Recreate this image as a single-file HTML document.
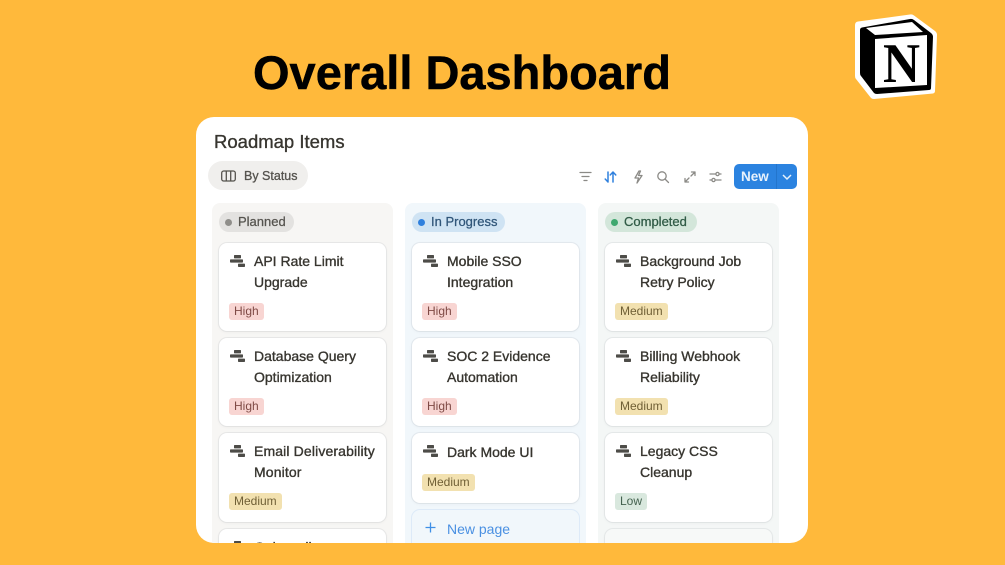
<!DOCTYPE html>
<html><head><meta charset="utf-8">
<style>
*{box-sizing:border-box;margin:0;padding:0}
html,body{width:1005px;height:565px;overflow:hidden;background:#ffb93b;font-family:"Liberation Sans",sans-serif;color:#37352f}
.a{position:absolute}
h1{position:absolute;left:253px;top:45px;font-size:47px;line-height:56px;font-weight:700;color:#000;white-space:nowrap;-webkit-text-stroke:.5px #000}
#panel{position:absolute;left:196px;top:117px;width:612px;height:426px;background:#fff;border-radius:18px;overflow:hidden}
.col{position:absolute;top:86px;width:181px;height:340px;border-radius:8px 8px 0 0;overflow:hidden}
.card{position:absolute;left:7px;width:167px;background:#fff;border-radius:8px;box-shadow:0 0 0 1px rgba(60,70,80,.07),0 1px 3px rgba(60,70,80,.06)}
.card.cut{border-radius:8px 8px 0 0;overflow:hidden}
.t{position:absolute;left:35px;top:7.5px;font-size:14px;line-height:21px;font-weight:400;color:#37352f;white-space:nowrap;-webkit-text-stroke:.35px #37352f}
.i{position:absolute;left:11px;top:11px;width:16px;height:14px}
.tag{position:absolute;left:10px;height:17px;line-height:17px;font-size:12px;padding:0 5px;border-radius:3px;white-space:nowrap}
.h{background:#f8d5d2;color:#7f4a45}.m{background:#f2e1b0;color:#6f5f35}.l{background:#d9e8de;color:#44624f}
.pill{position:absolute;left:7px;top:9px;height:20px;border-radius:10px;font-size:13px;line-height:20px;padding-left:19px;white-space:nowrap}
.dot{position:absolute;left:6px;top:6.5px;width:7px;height:7px;border-radius:50%}
</style></head><body>
<h1>Overall Dashboard</h1>

<svg class="a" style="left:854px;top:13px" width="84" height="87" viewBox="0 0 84 87">
<path d="M1 12 Q1 9 4 8.5 L56 1.5 Q58 1 60 2.5 L81 18 Q83 19.5 83 22 L81 78 Q81 80 79 80.5 L20 86 Q18 86 17 85 L2 66 Q1 65 1 63Z" fill="#fff"/>
<path d="M6 17 Q6 15 8 14.5 L56 6 Q58 5.5 60 7 L77 20 Q79 21.5 79 24 L77 75 Q77 77 75 77 L23 81 Q21 81 20 80 L7 63 Q6 62 6 60Z" fill="#000"/>
<path d="M12 15 L58 9 L69 19 L21 22Z" fill="#fff"/>
<path d="M21 26 L73 22 L73 72 L21 75Z" fill="#fff"/>
<text x="29" y="69" font-family="Liberation Serif,serif" font-weight="700" font-size="56" textLength="37" lengthAdjust="spacingAndGlyphs" fill="#000">N</text>
</svg>

<div id="panel">
 <div class="a" style="left:18px;top:13px;font-size:18.5px;line-height:24px;color:#37352f;white-space:nowrap;-webkit-text-stroke:.35px #37352f">Roadmap Items</div>
 <div class="a" style="left:12px;top:44px;width:100px;height:29px;background:#f0efed;border-radius:15px"></div>
 <svg class="a" style="left:25px;top:53px" width="15" height="12" viewBox="0 0 15 12" fill="none" stroke="#55534e" stroke-width="1.3"><rect x=".7" y="1" width="13.6" height="10" rx="2"/><path d="M5.3 1v10M9.7 1v10"/></svg>
 <div class="a" style="left:48px;top:51px;font-size:12.5px;line-height:16px;color:#55534e;white-space:nowrap;-webkit-text-stroke:.3px #55534e">By Status</div>

 <svg class="a" style="left:382px;top:52px" width="145" height="16" viewBox="0 0 145 16" fill="none" stroke-width="1.3" stroke-linecap="round" stroke-linejoin="round">
  <path d="M2 3.5h11M4 7.5h7M6 11.5h3" stroke="#8b8a86"/>
  <path d="M30 3v10M27.2 10l2.8 3 M35 13V3M32.2 6L35 3l2.8 3" stroke="#2f80dd" stroke-width="1.5"/>
  <path d="M61 2l-4 7h3.5l-1.5 5 5-7.5h-3.5L62.5 2z" stroke="#8b8a86"/>
  <circle cx="84" cy="7" r="4.2" stroke="#8b8a86"/><path d="M87 10l3.5 3.5" stroke="#8b8a86"/>
  <path d="M107 13l4-4M107 9.5V13h3.5M117 3l-4 4M113.5 3H117v3.5" stroke="#8b8a86"/>
  <path d="M132 5h5M142 5h1M132 11h1M138 11h5" stroke="#8b8a86"/><circle cx="139.5" cy="5" r="1.6" stroke="#8b8a86"/><circle cx="135.5" cy="11" r="1.6" stroke="#8b8a86"/>
 </svg>
 <div class="a" style="left:538px;top:47px;width:63px;height:25px;background:#2b83e0;border-radius:5px"></div>
 <div class="a" style="left:580px;top:47px;width:1px;height:25px;background:#2375cc"></div>
 <div class="a" style="left:545px;top:52px;font-size:13.5px;line-height:16px;font-weight:700;color:#e8f2fc;white-space:nowrap">New</div>
 <svg class="a" style="left:585px;top:56px" width="12" height="8" viewBox="0 0 12 8" fill="none" stroke="#e8f2fc" stroke-width="1.5"><path d="M2 2l4 4 4-4"/></svg>

 <div class="col" style="left:16px;background:#f7f6f4">
  <div class="pill" style="width:75px;background:#e3e2e0;color:#55534e;-webkit-text-stroke:.25px #55534e"><span class="dot" style="background:#8f8e8a"></span>Planned</div>
  <div class="card" style="top:40px;height:88px"><svg class="i" viewBox="0 0 16 14" fill="#4d4c48"><rect x="4" y="1" width="7" height="3.4" rx=".7"/><rect y="5.4" width="13" height="3.2" rx=".7"/><rect x="8" y="9.6" width="7" height="3.4" rx=".7"/></svg><div class="t">API Rate Limit<br>Upgrade</div><div class="tag h" style="top:60px">High</div></div>
  <div class="card" style="top:135px;height:88px"><svg class="i" viewBox="0 0 16 14" fill="#4d4c48"><rect x="4" y="1" width="7" height="3.4" rx=".7"/><rect y="5.4" width="13" height="3.2" rx=".7"/><rect x="8" y="9.6" width="7" height="3.4" rx=".7"/></svg><div class="t">Database Query<br>Optimization</div><div class="tag h" style="top:60px">High</div></div>
  <div class="card" style="top:230px;height:89px"><svg class="i" viewBox="0 0 16 14" fill="#4d4c48"><rect x="4" y="1" width="7" height="3.4" rx=".7"/><rect y="5.4" width="13" height="3.2" rx=".7"/><rect x="8" y="9.6" width="7" height="3.4" rx=".7"/></svg><div class="t" style="top:8px;letter-spacing:.13px">Email Deliverability<br>Monitor</div><div class="tag m" style="top:60px">Medium</div></div>
  <div class="card cut" style="top:326px;height:14px"><svg class="i" viewBox="0 0 16 14" fill="#4d4c48"><rect x="4" y="1" width="7" height="3.4" rx=".7"/><rect y="5.4" width="13" height="3.2" rx=".7"/><rect x="8" y="9.6" width="7" height="3.4" rx=".7"/></svg><div class="t">Onboarding</div></div>
 </div>

 <div class="col" style="left:209px;background:#f1f7fb">
  <div class="pill" style="width:93px;background:#cfe3f3;color:#2f5578;-webkit-text-stroke:.25px #2f5578"><span class="dot" style="background:#2f80dd"></span>In Progress</div>
  <div class="card" style="top:40px;height:88px"><svg class="i" viewBox="0 0 16 14" fill="#4d4c48"><rect x="4" y="1" width="7" height="3.4" rx=".7"/><rect y="5.4" width="13" height="3.2" rx=".7"/><rect x="8" y="9.6" width="7" height="3.4" rx=".7"/></svg><div class="t">Mobile SSO<br>Integration</div><div class="tag h" style="top:60px">High</div></div>
  <div class="card" style="top:135px;height:88px"><svg class="i" viewBox="0 0 16 14" fill="#4d4c48"><rect x="4" y="1" width="7" height="3.4" rx=".7"/><rect y="5.4" width="13" height="3.2" rx=".7"/><rect x="8" y="9.6" width="7" height="3.4" rx=".7"/></svg><div class="t">SOC 2 Evidence<br>Automation</div><div class="tag h" style="top:60px">High</div></div>
  <div class="card" style="top:230px;height:70px"><svg class="i" viewBox="0 0 16 14" fill="#4d4c48"><rect x="4" y="1" width="7" height="3.4" rx=".7"/><rect y="5.4" width="13" height="3.2" rx=".7"/><rect x="8" y="9.6" width="7" height="3.4" rx=".7"/></svg><div class="t" style="top:9px">Dark Mode UI</div><div class="tag m" style="top:41px">Medium</div></div>
  <div class="card cut" style="top:307px;height:33px;background:#f1f7fb;box-shadow:0 0 0 1px rgba(47,128,221,.1)">
   <svg class="a" style="left:12px;top:11px" width="13" height="13" viewBox="0 0 13 13" stroke="#3f8fe6" stroke-width="1.3"><path d="M6.5 1.5v10M1.5 6.5h10"/></svg>
   <div class="t" style="top:9px;color:#4a90e2;-webkit-text-stroke:0">New page</div>
  </div>
 </div>

 <div class="col" style="left:402px;background:#f4f7f6">
  <div class="pill" style="width:92px;background:#d3e6da;color:#2f5a45;-webkit-text-stroke:.25px #2f5a45"><span class="dot" style="background:#3fa86f"></span>Completed</div>
  <div class="card" style="top:40px;height:88px"><svg class="i" viewBox="0 0 16 14" fill="#4d4c48"><rect x="4" y="1" width="7" height="3.4" rx=".7"/><rect y="5.4" width="13" height="3.2" rx=".7"/><rect x="8" y="9.6" width="7" height="3.4" rx=".7"/></svg><div class="t">Background Job<br>Retry Policy</div><div class="tag m" style="top:60px">Medium</div></div>
  <div class="card" style="top:135px;height:88px"><svg class="i" viewBox="0 0 16 14" fill="#4d4c48"><rect x="4" y="1" width="7" height="3.4" rx=".7"/><rect y="5.4" width="13" height="3.2" rx=".7"/><rect x="8" y="9.6" width="7" height="3.4" rx=".7"/></svg><div class="t">Billing Webhook<br>Reliability</div><div class="tag m" style="top:60px">Medium</div></div>
  <div class="card" style="top:230px;height:89px"><svg class="i" viewBox="0 0 16 14" fill="#4d4c48"><rect x="4" y="1" width="7" height="3.4" rx=".7"/><rect y="5.4" width="13" height="3.2" rx=".7"/><rect x="8" y="9.6" width="7" height="3.4" rx=".7"/></svg><div class="t" style="top:8px">Legacy CSS<br>Cleanup</div><div class="tag l" style="top:60px">Low</div></div>
  <div class="card cut" style="top:326px;height:14px;background:#f7f9f8"></div>
 </div>
</div>
</body></html>
